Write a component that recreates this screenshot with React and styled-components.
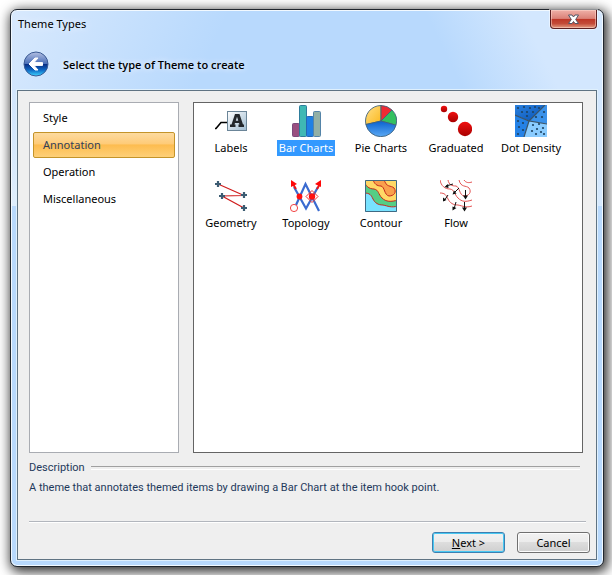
import React, { useState } from 'react'
import styled, { createGlobalStyle } from 'styled-components'

const categories = ['Style', 'Annotation', 'Operation', 'Miscellaneous']

const LabelsIcon = () => (
	<svg width='32' height='32' viewBox='0 0 32 32'>
		<defs>
			<linearGradient id='labelBox' x1='0' y1='0' x2='1' y2='1'>
				<stop offset='0' stopColor='#ffffff' />
				<stop offset='1' stopColor='#9fbbd0' />
			</linearGradient>
		</defs>
		<path d='M0 23.5h1L6 17.5h7' fill='none' stroke='#000' strokeWidth='1.6' />
		<rect x='12.5' y='6.5' width='19' height='19' fill='url(#labelBox)' stroke='#6b8598' />
		<path
			d='M15 22v-2.5h1.5L20 9h4.5l3.5 10.5H29V22h-5.5v-2.5h1l-.5-1.5h-4l-.5 1.5h1V22zM20.8 15.8h2.5L22 11.8z'
			fill='#23272b'
			fillRule='evenodd'
		/>
	</svg>
)

const BarIcon = () => (
	<svg width='32' height='32' viewBox='0 0 32 32'>
		<rect x='2.5' y='18.5' width='7' height='13' rx='1' fill='#9a4f80' stroke='#7c4a7c' />
		<rect x='9.5' y='0.5' width='7' height='31' rx='1' fill='#3fb8b4' stroke='#2e7d9c' />
		<rect x='16.5' y='11.5' width='7' height='20' rx='1' fill='#1f80e4' stroke='#2468b4' />
		<rect x='23.5' y='6.5' width='7' height='25' rx='1' fill='#92b0a6' stroke='#5484a8' />
	</svg>
)

const PieIcon = () => (
	<svg width='32' height='32' viewBox='0 0 32 32'>
		<defs>
			<linearGradient id='pieBlue' x1='0' y1='0' x2='0' y2='1'>
				<stop offset='0' stopColor='#0b62cf' />
				<stop offset='1' stopColor='#5aa8f4' />
			</linearGradient>
			<linearGradient id='pieYellow' x1='0' y1='0' x2='1' y2='1'>
				<stop offset='0' stopColor='#ffe08a' />
				<stop offset='1' stopColor='#fbb81c' />
			</linearGradient>
		</defs>
		<g stroke='#41627c' strokeWidth='0.9'>
			<path d='M16 16L.9 19.5A15.5 15.5 0 0 1 16 .5z' fill='url(#pieYellow)' />
			<path d='M16 16V.5a15.5 15.5 0 0 1 11 4.5z' fill='#ee2a33' />
			<path d='M16 16L27 5a15.5 15.5 0 0 1 4 15.2z' fill='#33c060' />
			<path d='M16 16l15 4.2A15.5 15.5 0 0 1 .9 19.5z' fill='url(#pieBlue)' />
		</g>
	</svg>
)

const GraduatedIcon = () => (
	<svg width='32' height='32' viewBox='0 0 32 32'>
		<defs>
			<linearGradient id='ball' x1='0' y1='0' x2='0' y2='1'>
				<stop offset='0' stopColor='#f01010' />
				<stop offset='1' stopColor='#a80000' />
			</linearGradient>
		</defs>
		<circle cx='4' cy='4' r='3.2' fill='url(#ball)' />
		<circle cx='13' cy='12' r='5.2' fill='url(#ball)' />
		<circle cx='25' cy='24' r='7.2' fill='url(#ball)' />
	</svg>
)

const densityDots = [
	[3, 3], [9, 2], [15, 3], [20, 2], [24, 3], [7, 7], [12, 7], [18, 7], [12, 11],
	[29, 7], [27, 12], [21, 12], [3, 16], [8, 18], [4, 22], [8, 25], [3, 29],
	[18, 20], [24, 19], [28, 23], [22, 24], [17, 26], [26, 27], [29, 29], [21, 29]
]

const DensityIcon = () => (
	<svg width='32' height='32' viewBox='0 0 32 32'>
		<defs>
			<linearGradient id='densityTop' x1='0' y1='0' x2='1' y2='1'>
				<stop offset='0' stopColor='#2c82e0' />
				<stop offset='1' stopColor='#0752b4' />
			</linearGradient>
		</defs>
		<path d='M0 0h30L14 16 0 10z' fill='url(#densityTop)' />
		<path d='M30 0h2v19l-18-3z' fill='#3b92ea' />
		<path d='M14 16l18 3v13H9z' fill='#8accff' />
		<path d='M0 10l14 6-5 16H0z' fill='#2582e6' />
		<path
			d='M0 10l14 6L30 0M32 19l-18-3-5 16'
			fill='none'
			stroke='#3a5468'
			strokeWidth='1.2'
		/>
		{densityDots.map(([x, y]) => (
			<circle key={`${x}-${y}`} cx={x} cy={y} r='1.1' fill='#1d4464' />
		))}
	</svg>
)

const GeometryIcon = () => (
	<svg width='32' height='32' viewBox='0 0 32 32'>
		<path d='M3 4l26 11.5-22 .5 22 12' fill='none' stroke='#d01c1c' strokeWidth='1.2' />
		<path
			d='M3 1v6M0 4h6M29 12v6M26 15h6M7 13v6M4 16h6M29 25v6M26 28h6'
			stroke='#3c5c72'
			strokeWidth='2.2'
		/>
	</svg>
)

const TopologyIcon = () => (
	<svg width='32' height='32' viewBox='0 0 32 32'>
		<path
			d='M6 25L15.5 4 29 31M4 7l12 21.5L28 7'
			fill='none'
			stroke='#3a6bd0'
			strokeWidth='2.2'
		/>
		<path d='M3 4l3 5M30 4l-3 5' stroke='#ee1515' strokeWidth='2' />
		<path d='M1 0l6 4-6 3zM31 0l-6 4 6 3z' fill='#ff0808' />
		<circle cx='4' cy='28' r='3.6' fill='#fff' stroke='#f03030' strokeWidth='0.9' />
		<circle cx='9.5' cy='16.5' r='2.9' fill='#ff1010' />
		<circle cx='22' cy='16.5' r='3.2' fill='#ff1010' />
		<path d='M22 10.5l6 6-6 6-6-6z' fill='none' stroke='#f03030' />
	</svg>
)

const ContourIcon = () => (
	<svg width='32' height='32' viewBox='0 0 32 32'>
		<path d='M0 0h32v32H0z' fill='#78e2ff' />
		<g stroke='#c5271c' strokeWidth='1'>
			<path d='M-1 13c6 0 7 2 9 6s5 6 10 6c5 1 8 3 15 1V-1H-1z' fill='#54ce85' />
			<path d='M-1 0c1 6 5 9 10 9 5 1 4 5 8 9s9 4 16 2V-1H-1z' fill='#ffd866' />
			<path d='M8-1c1 5 4 7 8 7 4 1 3 9 8 10 5 0 8-4 5-8-3-3-8 0-10-9z' fill='#f9a04c' />
		</g>
		<path d='M.5.5h31v31H.5z' fill='none' stroke='#3f6a84' />
	</svg>
)

const FlowIcon = () => (
	<svg width='32' height='32' viewBox='0 0 32 32'>
		<g fill='none' stroke='#e04040' strokeWidth='0.9'>
			<path d='M0 0c1 6 5 9 10 9 5 1 4 5 8 9s8 4 14 2' />
			<path d='M8 0c1 5 4 6 8 6 4 1 3 9 8 10 5 0 8-4 5-8-3-3-8 0-10-8' />
			<path d='M0 13c5 0 6 2 8 6s5 6 10 6c5 1 8 3 14 1M24 0c2 3 5 3 8 2' />
		</g>
		<g stroke='#111' strokeWidth='1'>
			<path d='M13 4L6 6M19 8l-5 5M8 15l-4 6M25.5 10v8M16 22l-2 7M24.5 22v8' />
		</g>
		<path
			d='M4.5 7l3.5-3 .5 4zM12.5 14.5l1.5-4 2.5 3zM3 21.5v-4l3.5 2.5zM23 15.500h5l-2.500 4zM12.500 30.500v-4l4 1.500zM22 27.500h5l-2.500 4z'
			fill='#111'
		/>
	</svg>
)

const themes = [
	{ name: 'Labels', Icon: LabelsIcon },
	{ name: 'Bar Charts', Icon: BarIcon },
	{ name: 'Pie Charts', Icon: PieIcon },
	{ name: 'Graduated', Icon: GraduatedIcon },
	{ name: 'Dot Density', Icon: DensityIcon },
	{ name: 'Geometry', Icon: GeometryIcon },
	{ name: 'Topology', Icon: TopologyIcon },
	{ name: 'Contour', Icon: ContourIcon },
	{ name: 'Flow', Icon: FlowIcon }
]

const BackIcon = () => (
	<svg width='26' height='26' viewBox='0 0 26 26'>
		<defs>
			<linearGradient id='orb' x1='0' y1='0' x2='0' y2='1'>
				<stop offset='0' stopColor='#b4c0e2' />
				<stop offset='0.48' stopColor='#4a6fb8' />
				<stop offset='0.5' stopColor='#082a80' />
				<stop offset='0.75' stopColor='#0e68c4' />
				<stop offset='1' stopColor='#3fd6ff' />
			</linearGradient>
		</defs>
		<circle cx='13' cy='13' r='12' fill='url(#orb)' stroke='#3a5a94' />
		<path
			d='M6 13l6-6h3l-4 4.6h8.5v2.8H11l4 4.6h-3z'
			fill='#fff'
			stroke='#fff'
			strokeLinejoin='round'
		/>
	</svg>
)

const CloseIcon = () => (
	<svg width='13' height='11' viewBox='0 0 13 11'>
		<path
			d='M1.5 1h3.5l1.5 2L8 1h3.5L8.7 5.5l2.8 4H8l-1.5-2-1.5 2H1.5l2.8-4z'
			fill='#fff'
			stroke='#535666'
		/>
	</svg>
)

const App = () => {
	const [category, setCategory] = useState('Annotation')
	const [theme, setTheme] = useState('Bar Charts')

	return (
		<>
			<GlobalStyle />
			<Dialog>
				<TitleBar>
					<Title>Theme Types</Title>
					<CloseButton aria-label='Close'>
						<CloseIcon />
					</CloseButton>
				</TitleBar>
				<Header>
					<BackButton aria-label='Back'>
						<BackIcon />
					</BackButton>
					<Heading>Select the type of Theme to create</Heading>
				</Header>
				<Content>
					<Panes>
						<CategoryList>
							{categories.map(name => (
								<Category
									key={name}
									$active={name === category}
									onClick={() => setCategory(name)}
								>
									{name}
								</Category>
							))}
						</CategoryList>
						<ThemeGrid>
							{themes.map(({ name, Icon }) => (
								<ThemeItem key={name} onClick={() => setTheme(name)}>
									<Icon />
									<ThemeName $active={name === theme}>{name}</ThemeName>
								</ThemeItem>
							))}
						</ThemeGrid>
					</Panes>
					<Description>
						<Legend>Description</Legend>
						<p>
							A theme that annotates themed items by drawing a Bar Chart at the
							item hook point.
						</p>
					</Description>
					<Actions>
						<ActionButton $primary>
							<u>N</u>ext &gt;
						</ActionButton>
						<ActionButton>Cancel</ActionButton>
					</Actions>
				</Content>
			</Dialog>
		</>
	)
}

export default App

const GlobalStyle = createGlobalStyle`
	* {
		box-sizing: border-box;
	}
	body {
		margin: 0;
		padding: 9px 8px 8px 10px;
		overflow: hidden;
		background: #fff;
		color: #000;
		font-family: 'Noto Sans', 'Open Sans', sans-serif;
		font-size: 11px;
		line-height: 16px;
	}
	button {
		padding: 0;
		border: 0;
		background: none;
		color: inherit;
		font: inherit;
	}
	svg {
		display: block;
	}
`
const Dialog = styled.main`
	padding: 0 6px 6px;
	border: 1px solid #20262e;
	border-radius: 7px;
	background:
		linear-gradient(64deg, transparent 74%, #d3e7fe 88%) top / 100% 196px no-repeat,
		linear-gradient(116deg, #d8e9fd 0, transparent 32%) top / 100% 196px no-repeat,
		linear-gradient(transparent 80px, #e6f3fd 185px) top / 100% 196px no-repeat,
		#b8d9fd;
	box-shadow:
		inset 0 0 0 1px #f2f9ff,
		2px 3px 12px 2px rgba(0, 0, 0, 0.8);
`
const TitleBar = styled.header`
	display: flex;
	justify-content: space-between;
	align-items: flex-start;
	height: 34px;
`
const Title = styled.h1`
	margin: 6px 0 0 1px;
	font-size: 11px;
	font-weight: 400;
	text-shadow: 0 0 8px #fff;
`
const CloseButton = styled.button`
	display: flex;
	justify-content: center;
	align-items: center;
	width: 47px;
	height: 19px;
	border: 1px solid #5b1f22;
	border-top: 0;
	border-radius: 0 0 4px 4px;
	background: linear-gradient(#efb0a8, #db8278 47%, #bd3526 50%, #c34a38 75%, #e29a80);
	box-shadow:
		inset 0 0 0 1px rgba(255, 220, 210, 0.5),
		0 0 0 1px rgba(255, 255, 255, 0.5);
`
const Header = styled.div`
	display: flex;
	align-items: flex-start;
	gap: 14px;
	height: 46px;
	padding: 7px 0 0 6px;
`
const BackButton = styled.button`
	border-radius: 50%;
`
const Heading = styled.h2`
	margin: 6px 0 0;
	font-family: 'Open Sans', sans-serif;
	font-size: 11px;
	font-weight: 600;
	text-shadow: 0 0 6px #fff;
`
const Content = styled.section`
	padding: 11px 6px 6px 11px;
	border: 1px solid #5f7383;
	background: #efefef;
	box-shadow: 0 0 0 1px #dff0fd;
`
const Panes = styled.div`
	display: flex;
	gap: 14px;
	height: 351px;
	padding-right: 7px;
`
const CategoryList = styled.nav`
	display: flex;
	flex: none;
	flex-direction: column;
	gap: 1px;
	width: 150px;
	padding: 2px 3px;
	border: 1px solid #a9acb2;
	background: #fff;
`
const Category = styled.button`
	height: 26px;
	padding: 0 9px;
	border: 1px solid ${p => (p.$active ? '#c4942a' : 'transparent')};
	border-radius: 2px;
	background: ${p =>
		p.$active ? 'linear-gradient(#fddb9f, #fecb78 45%, #fdbc4f 50%, #fed078)' : 'none'};
	color: ${p => (p.$active ? '#33405a' : '#000')};
	text-align: left;
`
const ThemeGrid = styled.div`
	display: grid;
	flex: 1;
	grid-template-columns: repeat(auto-fill, 75px);
	grid-auto-rows: 75px;
	padding-top: 2px;
	border: 1px solid #646464;
	background: #fff;
`
const ThemeItem = styled.button`
	display: flex;
	flex-direction: column;
	align-items: center;
	gap: 3px;
	padding-right: 1px;
	white-space: nowrap;
`
const ThemeName = styled.span`
	padding: 0 2px;
	background: ${p => (p.$active ? '#3399ff' : 'none')};
	color: ${p => (p.$active ? '#fff' : '#000')};
`
const Description = styled.div`
	height: 69px;
	margin-right: 4px;
	padding-top: 7px;
	border-bottom: 1px solid #b2b6bd;
	box-shadow: 0 1px #fff;
	color: #1e395b;
	font-family: Roboto, 'Liberation Sans', sans-serif;
	p {
		margin: 4px 0 0;
	}
`
const Legend = styled.div`
	display: flex;
	align-items: center;
	gap: 6px;
	padding-right: 6px;
	&::after {
		flex: 1;
		height: 2px;
		border-top: 1px solid #a0a0a0;
		border-bottom: 1px solid #fff;
		content: '';
	}
`
const Actions = styled.div`
	display: flex;
	justify-content: flex-end;
	gap: 12px;
	padding-top: 10px;
`
const ActionButton = styled.button`
	width: 73px;
	height: 21px;
	border: 1px solid ${p => (p.$primary ? '#3c7fb1' : '#707070')};
	border-radius: 3px;
	background: linear-gradient(#f2f2f2, #ebebeb 49%, #dddddd 50%, #cfcfcf);
	box-shadow: inset 0 0 0 1px ${p => (p.$primary ? '#48c8f2' : '#fcfcfc')};
`
